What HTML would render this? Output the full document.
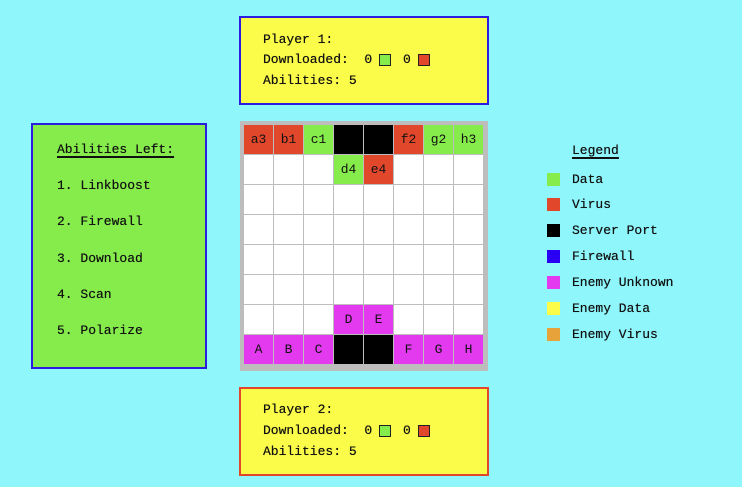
<!DOCTYPE html>
<html><head><style>
body{margin:0;width:742px;height:487px;background:#8ff6fb;position:relative;overflow:hidden;font-family:"Liberation Mono",monospace;font-size:13px;color:#111}
.box{position:absolute;box-sizing:border-box}
.t{position:absolute;white-space:pre;line-height:14px;text-shadow:0 0 0.4px #111}
.sq{position:absolute;width:12px;height:12px;border:1px solid #222;box-sizing:border-box}
.grid{position:absolute;left:240px;top:121px;width:248px;height:250px;background:#bdbdbd}
.c{position:absolute;width:29px;height:29px;background:#fff;text-align:center;line-height:29px;font-size:13px}
.lg{position:absolute;left:547px;width:13px;height:13px}
.u{text-decoration:underline;text-decoration-thickness:2px;text-underline-offset:3px}
</style></head><body>
<div class="box" style="left:239px;top:16px;width:250px;height:89px;background:#fbfb4a;border:2px solid #2a1de0"></div>
<div class="t" style="left:263px;top:33px">Player 1:</div>
<div class="t" style="left:263px;top:53px">Downloaded:  0</div><div class="sq" style="left:379px;top:54px;background:#86ec4c"></div>
<div class="t" style="left:403px;top:53px">0</div><div class="sq" style="left:418px;top:54px;background:#e0472b"></div>
<div class="t" style="left:263px;top:74px">Abilities: 5</div>

<div class="box" style="left:239px;top:387px;width:250px;height:89px;background:#fbfb4a;border:2px solid #e0472b"></div>
<div class="t" style="left:263px;top:403px">Player 2:</div>
<div class="t" style="left:263px;top:424px">Downloaded:  0</div><div class="sq" style="left:379px;top:425px;background:#86ec4c"></div>
<div class="t" style="left:403px;top:424px">0</div><div class="sq" style="left:418px;top:425px;background:#e0472b"></div>
<div class="t" style="left:263px;top:445px">Abilities: 5</div>

<div class="box" style="left:31px;top:123px;width:176px;height:246px;background:#86ec4c;border:2px solid #2a1de0"></div>
<div class="t u" style="left:57px;top:143px">Abilities Left:</div>
<div class="t" style="left:57px;top:179px">1. Linkboost</div>
<div class="t" style="left:57px;top:215px">2. Firewall</div>
<div class="t" style="left:57px;top:252px">3. Download</div>
<div class="t" style="left:57px;top:288px">4. Scan</div>
<div class="t" style="left:57px;top:324px">5. Polarize</div>

<div class="grid" id="g"></div>

<div class="t u" style="left:572px;top:144px">Legend</div>
<div class="lg" style="top:173px;background:#86ec4c"></div><div class="t" style="left:572px;top:173px">Data</div>
<div class="lg" style="top:198px;background:#e0472b"></div><div class="t" style="left:572px;top:198px">Virus</div>
<div class="lg" style="top:224px;background:#000"></div><div class="t" style="left:572px;top:224px">Server Port</div>
<div class="lg" style="top:250px;background:#2a00f5"></div><div class="t" style="left:572px;top:250px">Firewall</div>
<div class="lg" style="top:276px;background:#e33af0"></div><div class="t" style="left:572px;top:276px">Enemy Unknown</div>
<div class="lg" style="top:302px;background:#fbfb4a"></div><div class="t" style="left:572px;top:302px">Enemy Data</div>
<div class="lg" style="top:328px;background:#e8a23a"></div><div class="t" style="left:572px;top:328px">Enemy Virus</div>
<script>
var R='#e0472b',G='#86ec4c',K='#000',M='#e33af0';
var cells={'0,0':[R,'a3'],'0,1':[R,'b1'],'0,2':[G,'c1'],'0,3':[K,''],'0,4':[K,''],'0,5':[R,'f2'],'0,6':[G,'g2'],'0,7':[G,'h3'],
'1,3':[G,'d4'],'1,4':[R,'e4'],'6,3':[M,'D'],'6,4':[M,'E'],
'7,0':[M,'A'],'7,1':[M,'B'],'7,2':[M,'C'],'7,3':[K,''],'7,4':[K,''],'7,5':[M,'F'],'7,6':[M,'G'],'7,7':[M,'H']};
var g=document.getElementById('g'),h='';
for(var r=0;r<8;r++)for(var c=0;c<8;c++){var v=cells[r+','+c]||['#fff',''];
h+='<div class="c" style="left:'+(4+c*30)+'px;top:'+(4+r*30)+'px;background:'+v[0]+'">'+v[1]+'</div>';}
g.innerHTML=h;
</script>
</body></html>
